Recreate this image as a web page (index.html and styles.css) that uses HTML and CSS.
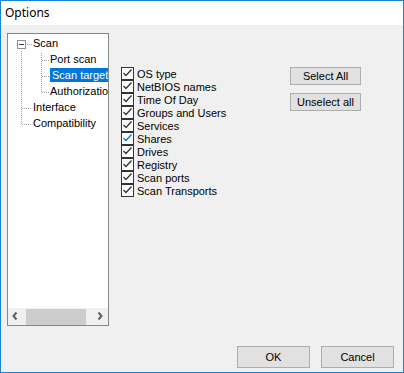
FILE: index.html
```html
<!DOCTYPE html>
<html lang="en">
<head>
  <meta charset="UTF-8">
  <title>Options</title>
  <link rel="stylesheet" href="styles.css">
</head>
<body>

  <div class="window">
    <!-- Title Bar -->
    <div class="titlebar">Options</div>

    <div class="main">
      <!-- Tree view -->
      <div class="tree">
        <svg class="tree-lines" width="100" height="100" viewBox="0 0 100 100">
          <g stroke="#a0a0a0" stroke-width="1" stroke-dasharray="1 1" fill="none">
            <line x1="19" y1="9.5" x2="24" y2="9.5"/>
            <line x1="13.5" y1="16" x2="13.5" y2="90"/>
            <line x1="14" y1="73.5" x2="24" y2="73.5"/>
            <line x1="14" y1="89.5" x2="24" y2="89.5"/>
            <line x1="33.5" y1="18" x2="33.5" y2="58"/>
            <line x1="34" y1="25.5" x2="42" y2="25.5"/>
            <line x1="34" y1="41.5" x2="42" y2="41.5"/>
            <line x1="34" y1="57.5" x2="42" y2="57.5"/>
          </g>
          <rect x="9.5" y="5.5" width="8" height="8" fill="#fff" stroke="#919191"/>
          <line x1="11" y1="9.5" x2="16" y2="9.5" stroke="#1c3f7a"/>
        </svg>
        <div class="tree-items">
          <div class="node">Scan</div>
          <div class="node child">Port scan</div>
          <div class="node child"><span class="selected">Scan targets</span></div>
          <div class="node child">Authorization</div>
          <div class="node">Interface</div>
          <div class="node">Compatibility</div>
        </div>
        <div class="hscroll">
          <div class="arrow">
            <svg width="17" height="17" viewBox="0 0 17 17"><polyline points="8.5,4.5 5.5,8 8.5,11.5" fill="none" stroke="#606060" stroke-width="2"/></svg>
          </div>
          <div class="thumb"></div>
          <div class="spacer"></div>
          <div class="arrow">
            <svg width="17" height="17" viewBox="0 0 17 17"><polyline points="7.5,4.5 10.5,8 7.5,11.5" fill="none" stroke="#606060" stroke-width="2"/></svg>
          </div>
        </div>
      </div>

      <!-- Check list -->
      <div class="panel">
        <div class="checks">
          <label class="check"><span class="box"><svg width="11" height="11" viewBox="0 0 11 11"><polyline points="1.5,5 4,7.5 9.5,1.5" fill="none" stroke="#333" stroke-width="1.3"/></svg></span>OS type</label>
          <label class="check"><span class="box"><svg width="11" height="11" viewBox="0 0 11 11"><polyline points="1.5,5 4,7.5 9.5,1.5" fill="none" stroke="#333" stroke-width="1.3"/></svg></span>NetBIOS names</label>
          <label class="check"><span class="box"><svg width="11" height="11" viewBox="0 0 11 11"><polyline points="1.5,5 4,7.5 9.5,1.5" fill="none" stroke="#333" stroke-width="1.3"/></svg></span>Time Of Day</label>
          <label class="check"><span class="box"><svg width="11" height="11" viewBox="0 0 11 11"><polyline points="1.5,5 4,7.5 9.5,1.5" fill="none" stroke="#333" stroke-width="1.3"/></svg></span>Groups and Users</label>
          <label class="check"><span class="box"><svg width="11" height="11" viewBox="0 0 11 11"><polyline points="1.5,5 4,7.5 9.5,1.5" fill="none" stroke="#333" stroke-width="1.3"/></svg></span>Services</label>
          <label class="check hover"><span class="box"><svg width="11" height="11" viewBox="0 0 11 11"><polyline points="1.5,5 4,7.5 9.5,1.5" fill="none" stroke="#0078d7" stroke-width="1.3"/></svg></span>Shares</label>
          <label class="check"><span class="box"><svg width="11" height="11" viewBox="0 0 11 11"><polyline points="1.5,5 4,7.5 9.5,1.5" fill="none" stroke="#333" stroke-width="1.3"/></svg></span>Drives</label>
          <label class="check"><span class="box"><svg width="11" height="11" viewBox="0 0 11 11"><polyline points="1.5,5 4,7.5 9.5,1.5" fill="none" stroke="#333" stroke-width="1.3"/></svg></span>Registry</label>
          <label class="check"><span class="box"><svg width="11" height="11" viewBox="0 0 11 11"><polyline points="1.5,5 4,7.5 9.5,1.5" fill="none" stroke="#333" stroke-width="1.3"/></svg></span>Scan ports</label>
          <label class="check"><span class="box"><svg width="11" height="11" viewBox="0 0 11 11"><polyline points="1.5,5 4,7.5 9.5,1.5" fill="none" stroke="#333" stroke-width="1.3"/></svg></span>Scan Transports</label>
        </div>
        <div class="side-buttons">
          <button class="btn small">Select All</button>
          <button class="btn small">Unselect all</button>
        </div>
      </div>
    </div>

    <!-- Dialog buttons -->
    <div class="footer">
      <button class="btn">OK</button>
      <button class="btn">Cancel</button>
    </div>
  </div>

</body>
</html>
```

FILE: styles.css
```css
* {
  box-sizing: border-box;
}

body {
  margin: 0;
  font-family: 'Liberation Sans', Arial, sans-serif;
  font-size: 11px;
  color: #000;
}

.window {
  width: 404px;
  height: 373px;
  border: 1px solid #1883d7;
  background-color: #f0f0f0;
  display: flex;
  flex-direction: column;
}

/* Title Bar */
.titlebar {
  height: 24px;
  line-height: 24px;
  background-color: #fff;
  padding-left: 4px;
  font-family: 'Noto Sans', 'Open Sans', sans-serif;
  font-size: 12px;
}

.main {
  height: 301px;
  padding: 8px 0 0 6px;
  display: flex;
}

/* Tree view */
.tree {
  width: 102px;
  height: 293px;
  border: 1px solid #828790;
  background-color: #fff;
  position: relative;
  display: flex;
  flex-direction: column;
}

.tree-lines {
  position: absolute;
  left: 0;
  top: 1px;
}

.tree-items {
  flex: 1;
  padding-top: 1px;
  overflow: hidden;
}

.node {
  height: 16px;
  line-height: 16px;
  padding-left: 25px;
  white-space: nowrap;
}

.node.child {
  padding-left: 42px;
}

.selected {
  display: inline-block;
  height: 14px;
  line-height: 14px;
  margin-top: 1px;
  padding: 0 2px;
  background-color: #0078d7;
  color: #fff;
  vertical-align: top;
}

.hscroll {
  height: 17px;
  background-color: #f0f0f0;
  display: flex;
}

.arrow {
  width: 17px;
  height: 17px;
}

.arrow svg {
  display: block;
}

.thumb {
  width: 60px;
  height: 16px;
  margin: 1px 0 0 1px;
  background-color: #cdcdcd;
}

.spacer {
  flex: 1;
}

/* Check list */
.panel {
  margin-left: 12px;
  padding-top: 34px;
  display: flex;
  align-items: flex-start;
}

.checks {
  width: 169px;
  display: flex;
  flex-direction: column;
}

.check {
  height: 13px;
  display: flex;
  align-items: center;
  white-space: nowrap;
}

.box {
  width: 13px;
  height: 13px;
  border: 1px solid #333;
  background-color: #fff;
  margin-right: 3px;
  flex-shrink: 0;
}

.box svg {
  display: block;
}

.side-buttons {
  display: flex;
  flex-direction: column;
  gap: 8px;
}

/* Buttons */
.btn {
  width: 73px;
  height: 22px;
  padding: 0;
  border: 1px solid #adadad;
  background-color: #e1e1e1;
  font-family: 'Liberation Sans', Arial, sans-serif;
  font-size: 11px;
  color: #000;
}

.btn.small {
  width: 71px;
  height: 18px;
}

.footer {
  flex: 1;
  padding: 20px 9px 0 0;
  display: flex;
  justify-content: flex-end;
  align-items: flex-start;
  gap: 11px;
}
```
